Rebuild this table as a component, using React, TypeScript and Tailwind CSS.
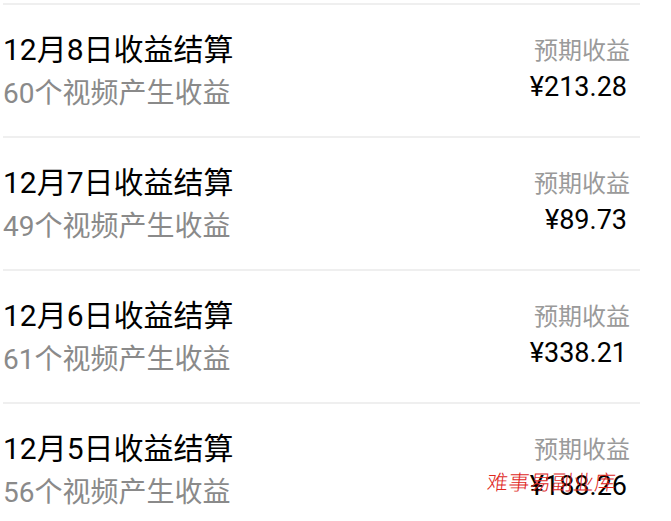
const rows = [
  { day: 8, count: 60, amount: '213.28' },
  { day: 7, count: 49, amount: '89.73' },
  { day: 6, count: 61, amount: '338.21' },
  { day: 5, count: 56, amount: '188.26' },
];

const font = { fontFamily: 'Roboto, "Noto Sans CJK SC", sans-serif' };

export default function App() {
  return (
    <div className="relative w-[671px] h-[521px] bg-white overflow-hidden" style={font}>
      <div className="ml-[3px] w-[637px] pt-[3px]">
        <div className="h-[2px] bg-[#efefef]" />
        {rows.map((r) => (
          <div
            key={r.day}
            className="h-[133px] border-b-2 border-[#efefef] flex justify-between pt-[27px] pr-[10px]"
          >
            <div className="flex flex-col gap-[8px]">
              <div className="text-[30px] leading-[36px] font-normal text-black">
                12月{r.day}日收益结算
              </div>
              <div className="text-[28px] leading-[36px] text-[#8a8a8a]">
                {r.count}个视频产生收益
              </div>
            </div>
            <div className="flex flex-col items-end pt-[3px] gap-[4px]">
              <div className="text-[24px] leading-[32px] text-[#9a9a9a]">预期收益</div>
              <div className="text-[27px] leading-[32px] font-normal text-black pr-[3px]">
                ¥{r.amount}
              </div>
            </div>
          </div>
        ))}
      </div>
      <div className="absolute left-[487px] top-[470px] text-[21px] leading-[26px] font-light text-[#e0281e] tracking-[0.5px] -skew-x-6">
        难事易副业库
      </div>
    </div>
  );
}
